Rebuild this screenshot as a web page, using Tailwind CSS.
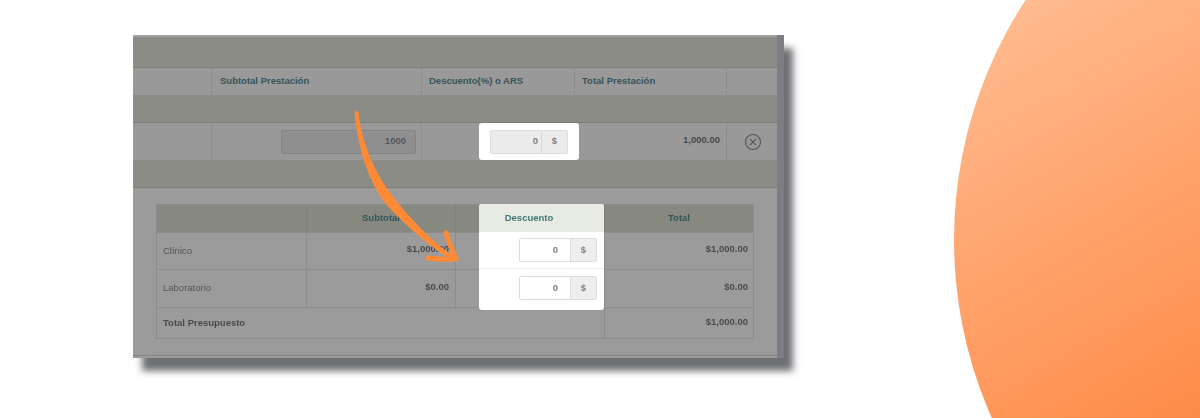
<!DOCTYPE html>
<html lang="es">
<head>
<meta charset="utf-8">
<title>Descuento</title>
<script src="https://cdn.jsdelivr.net/npm/@tailwindcss/browser@4"></script>
</head>
<body class="bg-white">
<div class="relative w-[1200px] h-[418px] overflow-hidden bg-white font-['Liberation_Sans',Arial,sans-serif]">
  <!-- decorative circle -->
  <div class="absolute left-[954px] top-[-198px] w-[876px] h-[876px] rounded-full bg-[linear-gradient(150deg,#ffbb90_17%,#fe8c49_54%)]"></div>

  <div class="pl-[133px] pt-[35px]">
    <div class="flex w-[651px] h-[323px] shadow-[9px_13px_7px_#6e7073] blur-[0.6px]">
      <div class="w-[644px] h-full flex flex-col bg-[#9b9b9b] text-[9.5px]">
        <div class="h-[2px] bg-[#a3a3a3]"></div>
        <div class="h-[31px] bg-[#8a8c85] border-b border-[#7d7f78]"></div>
        <!-- header row -->
        <div class="h-[27px] grid grid-cols-[79px_210px_153px_152px_50px] bg-[#999999] font-bold text-[#34545a]">
          <div class="border-r border-[#8d8d8d]"></div>
          <div class="border-r border-[#8d8d8d] pl-[8px] flex items-center">Subtotal Prestación</div>
          <div class="border-r border-[#8d8d8d] pl-[7px] flex items-center">Descuento(%) o ARS</div>
          <div class="border-r border-[#8d8d8d] pl-[7px] flex items-center">Total Prestación</div>
          <div></div>
        </div>
        <div class="h-[28px] bg-[#8a8c85] border-b border-[#7d7f78]"></div>
        <!-- item row -->
        <div class="h-[37px] grid grid-cols-[79px_210px_153px_152px_50px] bg-[#999999]">
          <div class="border-r border-[#8d8d8d]"></div>
          <div class="border-r border-[#8d8d8d] flex items-center justify-end pr-[5px]">
            <div class="w-[135px] h-[24px] rounded-[2px] bg-[#8f8f8f] border border-[#858585] flex items-center justify-end pr-[9px] font-bold text-[#565656]">1000</div>
          </div>
          <div class="border-r border-[#8d8d8d] flex justify-end">
            <div class="w-[100px] h-[37px] -mr-[5px] shrink-0 rounded-[3px] bg-white flex items-center justify-center relative z-10">
              <div class="w-[78px] h-[24px] flex rounded-[2px] border border-[#dcdcdc] bg-[#ebebeb] font-bold text-[#808080]">
                <div class="flex-1 flex items-center justify-end pr-[3px] border-r border-[#d8d8d8]">0</div>
                <div class="w-[25px] flex items-center justify-center">$</div>
              </div>
            </div>
          </div>
          <div class="border-r border-[#8d8d8d] flex items-center justify-end pr-[6px] font-bold text-[#4a4a4a] pb-[2px]">1,000.00</div>
          <div class="flex items-center justify-center -mr-[2px]">
            <svg width="18" height="18" viewBox="0 0 18 18" fill="none" stroke="#555555" stroke-width="1.1"><circle cx="9" cy="9" r="7.5"/><path d="M5.8 5.8 12.2 12.2M12.2 5.8 5.8 12.2"/></svg>
          </div>
        </div>
        <div class="h-[28px] bg-[#8a8c85] border-b border-[#7d7f78]"></div>
        <!-- summary area -->
        <div class="flex-1 pl-[23px] pt-[16px] flex flex-col">
          <div class="relative w-[598px] h-[135px] border border-[#8c8c8c] text-[9.5px]">
            <div class="grid grid-cols-[150px_149px_149px_148px] h-[27px] bg-[#878980] font-bold text-[#34545a]">
              <div class="border-r border-[#7e7f79]"></div>
              <div class="border-r border-[#7e7f79] flex items-center justify-center">Subtotal</div>
              <div class="border-r border-[#7e7f79]"></div>
              <div class="flex items-center justify-center">Total</div>
            </div>
            <div class="grid grid-cols-[150px_149px_149px_148px] h-[37px] border-t border-[#8c8c8c] text-[#555555]">
              <div class="border-r border-[#8c8c8c] pl-[6px] flex items-center">Clínico</div>
              <div class="border-r border-[#8c8c8c] pr-[6px] pb-[3px] flex items-center justify-end font-bold text-[#4a4a4a]">$1,000.00</div>
              <div class="border-r border-[#8c8c8c]"></div>
              <div class="pr-[5px] pb-[3px] flex items-center justify-end font-bold text-[#4a4a4a]">$1,000.00</div>
            </div>
            <div class="grid grid-cols-[150px_149px_149px_148px] h-[38px] border-t border-[#8c8c8c] text-[#555555]">
              <div class="border-r border-[#8c8c8c] pl-[6px] flex items-center">Laboratorio</div>
              <div class="border-r border-[#8c8c8c] pr-[6px] pb-[3px] flex items-center justify-end font-bold text-[#4a4a4a]">$0.00</div>
              <div class="border-r border-[#8c8c8c]"></div>
              <div class="pr-[5px] pb-[3px] flex items-center justify-end font-bold text-[#4a4a4a]">$0.00</div>
            </div>
            <div class="grid grid-cols-[448px_148px] h-[31px] border-t border-[#8c8c8c] font-bold text-[#4a4a4a]">
              <div class="border-r border-[#8c8c8c] pl-[6px] flex items-center">Total Presupuesto</div>
              <div class="pr-[5px] pb-[2px] flex items-center justify-end">$1,000.00</div>
            </div>
            <!-- highlight over the Descuento column -->
            <div class="absolute left-[322px] top-[-1px] w-[125px] h-[106px] rounded-[3px] overflow-hidden bg-white flex flex-col">
              <div class="h-[28px] bg-[#e8ebe4] flex items-center justify-center pr-[25px] font-bold text-[#3f7a76]">Descuento</div>
              <div class="h-[37px] flex items-center justify-end pr-[7px] border-b border-[#f0f0f0]">
                <div class="w-[78px] h-[24px] flex rounded-[2px] border border-[#dcdcdc] font-bold text-[#808080]">
                  <div class="flex-1 flex items-center justify-end pr-[12px] border-r border-[#dcdcdc] bg-white">0</div>
                  <div class="w-[25px] bg-[#eeeeee] flex items-center justify-center">$</div>
                </div>
              </div>
              <div class="h-[38px] flex items-center justify-end pr-[7px]">
                <div class="w-[78px] h-[24px] flex rounded-[2px] border border-[#dcdcdc] font-bold text-[#808080]">
                  <div class="flex-1 flex items-center justify-end pr-[12px] border-r border-[#dcdcdc] bg-white">0</div>
                  <div class="w-[25px] bg-[#eeeeee] flex items-center justify-center">$</div>
                </div>
              </div>
            </div>
          </div>
          <div class="mt-[16px] h-[1px] bg-[#858585] -ml-[23px]"></div>
        </div>
      </div>
      <div class="w-[7px] h-full bg-[#7b7e82]"></div>
    </div>
  </div>

  <!-- arrow -->
  <svg class="absolute left-0 top-0" width="1200" height="418" viewBox="0 0 1200 418" fill="none">
    <path d="M358.5 112 C362 145 376 175 394 198 C410 218 430 240 452 255 L450 259 C425 243 402 222 386 204 C366 178 358 145 354.5 113 Q356 109 358.5 112 Z" fill="#ff8a36"/>
    <path d="M446 233 C449 243 453 252 456 259 C447 260 437 259 428 258" stroke="#ff8a36" stroke-width="5" stroke-linecap="round" stroke-linejoin="round"/>
  </svg>
</div>
</body>
</html>
